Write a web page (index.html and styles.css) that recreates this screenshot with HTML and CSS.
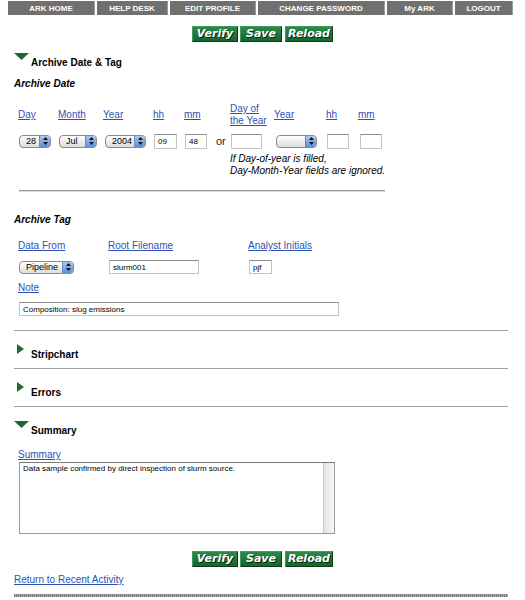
FILE: index.html
```html
<!DOCTYPE html>
<html lang="en">
<head>
    <meta charset="UTF-8">
    <title>ARK - Archive Entry</title>
    <link rel="stylesheet" href="styles.css">
</head>
<body>
    <div class="topnav">
        <a href="#" class="nav-item w-home">ARK HOME</a>
        <a href="#" class="nav-item w-help">HELP DESK</a>
        <a href="#" class="nav-item w-edit">EDIT PROFILE</a>
        <a href="#" class="nav-item w-pass">CHANGE PASSWORD</a>
        <a href="#" class="nav-item w-my">My ARK</a>
        <a href="#" class="nav-item w-out">LOGOUT</a>
    </div>

    <div class="actions actions-top">
        <button class="act w-verify">Verify</button>
        <button class="act w-save">Save</button>
        <button class="act w-reload">Reload</button>
    </div>

    <!-- Archive date & tag, expanded -->
    <div class="fold-head first">
        <svg class="tri-down" width="15" height="7" viewBox="0 0 15 7"><polygon points="0,0 15,0 7.5,7" fill="#1b6a33"/></svg>
        <span class="fold-title">Archive Date &amp; Tag</span>
    </div>

    <h3 class="sub-title date-title">Archive Date</h3>

    <div class="date-grid date-labels">
        <a href="#">Day</a>
        <a href="#">Month</a>
        <a href="#">Year</a>
        <a href="#">hh</a>
        <a href="#">mm</a>
        <span></span>
        <a href="#" class="two-line">Day of<br>the Year</a>
        <a href="#">Year</a>
        <a href="#">hh</a>
        <a href="#">mm</a>
    </div>

    <div class="date-grid date-controls">
        <span class="popup w-day"><span class="popup-val">28</span><span class="popup-arrows"><svg width="5" height="8" viewBox="0 0 5 8"><polygon points="2.5,0 5,3 0,3" fill="#111"/><polygon points="0,5 5,5 2.5,8" fill="#111"/></svg></span></span>
        <span class="popup w-month"><span class="popup-val">Jul</span><span class="popup-arrows"><svg width="5" height="8" viewBox="0 0 5 8"><polygon points="2.5,0 5,3 0,3" fill="#111"/><polygon points="0,5 5,5 2.5,8" fill="#111"/></svg></span></span>
        <span class="popup w-year"><span class="popup-val">2004</span><span class="popup-arrows"><svg width="5" height="8" viewBox="0 0 5 8"><polygon points="2.5,0 5,3 0,3" fill="#111"/><polygon points="0,5 5,5 2.5,8" fill="#111"/></svg></span></span>
        <input type="text" class="field w-hh" value="09">
        <input type="text" class="field w-mm" value="48">
        <span class="or">or</span>
        <input type="text" class="field w-doy" value="">
        <span class="popup w-year2"><span class="popup-val"></span><span class="popup-arrows"><svg width="5" height="8" viewBox="0 0 5 8"><polygon points="2.5,0 5,3 0,3" fill="#111"/><polygon points="0,5 5,5 2.5,8" fill="#111"/></svg></span></span>
        <input type="text" class="field w-hh2" value="">
        <input type="text" class="field w-mm2" value="">
    </div>

    <p class="date-note">If Day-of-year is filled,<br>Day-Month-Year fields are ignored.</p>

    <div class="rule-short"></div>

    <h3 class="sub-title tag-title">Archive Tag</h3>

    <div class="tag-grid tag-labels">
        <a href="#">Data From</a>
        <a href="#">Root Filename</a>
        <a href="#">Analyst Initials</a>
    </div>

    <div class="tag-grid tag-controls">
        <span class="popup w-source"><span class="popup-val">Pipeline</span><span class="popup-arrows"><svg width="5" height="8" viewBox="0 0 5 8"><polygon points="2.5,0 5,3 0,3" fill="#111"/><polygon points="0,5 5,5 2.5,8" fill="#111"/></svg></span></span>
        <input type="text" class="field w-root" value="slurm001">
        <input type="text" class="field w-init" value="pjf">
    </div>

    <div class="note-label"><a href="#">Note</a></div>
    <input type="text" class="field w-note" value="Composition: slug emissions">

    <!-- collapsed sections -->
    <div class="fold first-fold">
        <div class="fold-head">
            <svg class="tri-right" width="7" height="10" viewBox="0 0 7 10"><polygon points="0,0 7,5 0,10" fill="#1b6a33"/></svg>
            <span class="fold-title">Stripchart</span>
        </div>
    </div>
    <div class="fold">
        <div class="fold-head">
            <svg class="tri-right" width="7" height="10" viewBox="0 0 7 10"><polygon points="0,0 7,5 0,10" fill="#1b6a33"/></svg>
            <span class="fold-title">Errors</span>
        </div>
    </div>
    <div class="fold open">
        <div class="fold-head">
            <svg class="tri-down" width="15" height="7" viewBox="0 0 15 7"><polygon points="0,0 15,0 7.5,7" fill="#1b6a33"/></svg>
            <span class="fold-title">Summary</span>
        </div>
        <div class="summary-label"><a href="#">Summary</a></div>
        <div class="memo">
            <div class="memo-text">Data sample confirmed by direct inspection of slurm source.</div>
            <div class="memo-track"></div>
        </div>
    </div>

    <div class="actions actions-bottom">
        <button class="act w-verify">Verify</button>
        <button class="act w-save">Save</button>
        <button class="act w-reload">Reload</button>
    </div>

    <div class="back-link"><a href="#">Return to Recent Activity</a></div>

    <div class="rule-dotted"></div>
</body>
</html>
```

FILE: styles.css
```css
body {
    margin: 0;
    font-family: "Liberation Sans", Arial, sans-serif;
    font-size: 10px;
    color: #000;
    background: #fff;
}
a {
    color: #2d52b4;
    text-decoration: underline;
}

/* top navigation */
.topnav {
    display: flex;
    gap: 2px;
    margin: 1px 0 0 8px;
    height: 14px;
}
.nav-item {
    display: flex;
    align-items: center;
    justify-content: center;
    background-color: #707070;
    color: #fff;
    font-size: 8px;
    font-weight: bold;
    text-decoration: none;
    border-right: 1px solid #9a9a9a;
    box-sizing: border-box;
}
.w-home { width: 87px; }
.w-help { width: 71px; }
.w-edit { width: 86px; }
.w-pass { width: 127px; }
.w-my { width: 66px; }
.w-out { width: 58px; }

/* green action buttons */
.actions {
    display: flex;
    justify-content: center;
    gap: 2px;
    height: 16px;
}
.actions-top {
    margin-top: 11px;
}
.actions-bottom {
    margin-top: 17px;
}
.act {
    height: 16px;
    padding: 0;
    border: 1px solid #0a3a18;
    border-top-color: #3f9a5c;
    border-left-color: #3f9a5c;
    background: linear-gradient(#2a8a4a, #17652f);
    color: #fff;
    font-family: "DejaVu Sans", Verdana, sans-serif;
    font-size: 11px;
    font-weight: bold;
    font-style: italic;
    line-height: 14px;
    text-shadow: 1px 1px 0 #06280f;
    box-sizing: border-box;
    cursor: pointer;
}
.w-verify { width: 46px; }
.w-save { width: 42px; margin-right: 1px; }
.w-reload { width: 48px; }

/* fold headings */
.fold-head {
    display: flex;
    align-items: flex-start;
    padding-left: 14px;
    height: 16px;
}
.fold-head.first {
    margin-top: 10px;
}
.tri-down {
    margin-top: 1px;
    margin-right: 2px;
}
.tri-right {
    margin: 1px 7px 0 3px;
}
.fold-title {
    font-weight: bold;
    line-height: 14px;
    padding-top: 4px;
}

.sub-title {
    margin: 0 0 0 14px;
    font-size: 10px;
    font-style: italic;
    font-weight: bold;
    line-height: 14px;
}
.date-title {
    margin-top: 9px;
}
.tag-title {
    margin-top: 21px;
}

/* date fields */
.date-grid {
    display: grid;
    grid-template-columns: 40px 45px 50px 31px 32px 14px 44px 52px 32px 32px;
    align-items: center;
    margin-left: 18px;
}
.date-labels {
    margin-top: 12px;
    height: 24px;
    line-height: 12px;
}
.date-controls {
    margin-top: 6px;
    height: 16px;
}
.or {
    font-size: 11px;
    color: #222;
}
.date-note {
    margin: 4px 0 0 230px;
    font-style: italic;
    line-height: 12px;
}

/* popup menus */
.popup {
    display: flex;
    align-items: center;
    height: 13px;
    margin-left: 1px;
    border: 1px solid #8a8a8a;
    border-radius: 4px;
    background: linear-gradient(#ffffff, #dcdcdc);
    box-sizing: border-box;
    overflow: hidden;
    font-size: 9px;
}
.popup-val {
    flex: 1;
    padding-left: 6px;
}
.popup-arrows {
    display: flex;
    align-items: center;
    justify-content: center;
    width: 10px;
    height: 100%;
    background: linear-gradient(#a9c6ef, #5f8fd6);
    border-left: 1px solid #6c8cc0;
}
.w-day { width: 32px; }
.w-month { width: 38px; }
.w-year { width: 41px; margin-left: 2px; }
.w-year2 { width: 41px; margin-left: 2px; }
.w-source { width: 55px; }

/* text fields */
.field {
    height: 15px;
    margin: 0 0 0 1px;
    padding: 0 3px;
    border: 1px solid #c4c4c4;
    border-top-color: #8c8c8c;
    box-sizing: border-box;
    font-family: "Liberation Sans", Arial, sans-serif;
    font-size: 8px;
    color: #000;
}
.w-hh { width: 23px; }
.w-mm { width: 22px; }
.w-doy { width: 31px; }
.w-hh2 { width: 22px; }
.w-mm2 { width: 22px; margin-left: 2px; }
.w-root { width: 90px; height: 14px; }
.w-init { width: 23px; height: 14px; }
.w-note {
    display: block;
    width: 320px;
    height: 14px;
    margin: 8px 0 0 19px;
}

.rule-short {
    width: 366px;
    margin: 13px 0 0 19px;
    border-top: 1px solid #999;
    border-bottom: 1px solid #ddd;
}

/* archive tag fields */
.tag-grid {
    display: grid;
    grid-template-columns: 90px 140px auto;
    align-items: center;
    margin-left: 18px;
}
.tag-labels {
    margin-top: 13px;
    line-height: 12px;
}
.tag-controls {
    margin-top: 7px;
    height: 16px;
}
.note-label {
    margin: 7px 0 0 18px;
    line-height: 12px;
}

/* collapsible sections */
.fold {
    margin: 0 0 0 14px;
    width: 494px;
    border-top: 1px solid #a0a0a0;
    padding-top: 12px;
    height: 38px;
    box-sizing: border-box;
}
.fold.first-fold {
    margin-top: 14px;
}
.fold .fold-head {
    padding-left: 0;
}
.fold .tri-right {
    margin-left: 3px;
}
.fold .fold-title {
    padding-top: 5px;
}
.fold.open {
    height: auto;
    padding-top: 13px;
}
.fold.open .fold-title {
    padding-top: 4px;
}
.summary-label {
    margin: 13px 0 0 4px;
    line-height: 12px;
}
.memo {
    display: flex;
    width: 316px;
    height: 72px;
    margin: 1px 0 0 5px;
    border: 1px solid #9a9a9a;
    border-top-color: #777;
    box-sizing: border-box;
}
.memo-text {
    flex: 1;
    padding: 1px 3px;
    font-size: 8px;
}
.memo-track {
    width: 10px;
    background: linear-gradient(90deg, #e4e4e4, #f6f6f6);
    border-left: 1px solid #c8c8c8;
}

.back-link {
    margin: 7px 0 0 14px;
    line-height: 12px;
}
.rule-dotted {
    width: 494px;
    height: 3px;
    margin: 8px 0 0 14px;
    background: repeating-linear-gradient(90deg, #7a7a7a 0 1px, #a8a8a8 1px 2px);
}
```
